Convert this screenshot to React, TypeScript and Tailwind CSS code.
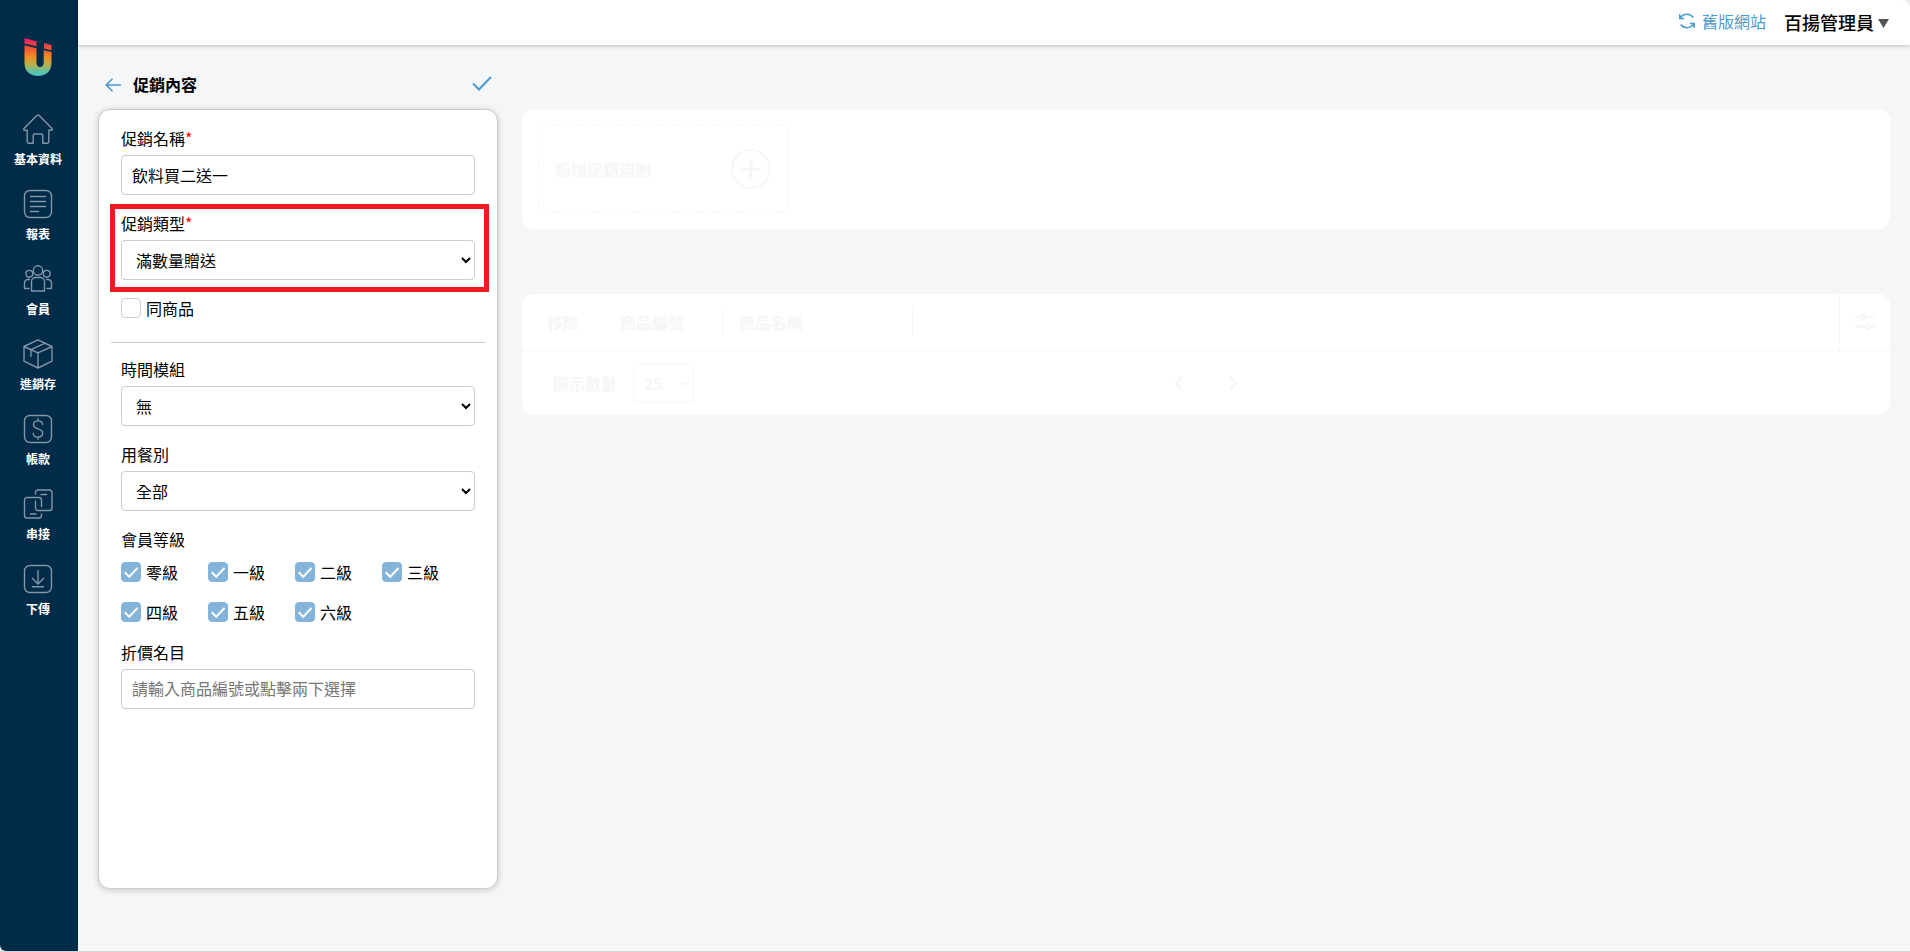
import { useState, type ReactNode } from "react";

const NAV_ITEMS: { label: string; icon: ReactNode }[] = [
  {
    label: "基本資料",
    icon: (
      <path d="M13.800 1.500 1 14.400c-.6.800-.2 1.800.8 1.800H4.200v11.600c0 .9.500 1.400 1.400 1.400h4.600v-7.400c0-1.200.7-1.800 1.800-1.800h6c1.100 0 1.800.6 1.800 1.800v7.400h4.600c.9 0 1.400-.5 1.400-1.400V16.200h2.400c1 0 1.400-1 .8-1.800L16.200 1.500c-.8-.7-1.600-.7-2.400 0Z" />
    ),
  },
  {
    label: "報表",
    icon: (
      <>
        <rect x="1.500" y="1.500" width="27" height="27" rx="5.500" />
        <path d="M7.500 7.500h15M7.500 12.500h15M7.500 17.500h15M7.500 22.500h8" />
      </>
    ),
  },
  {
    label: "會員",
    icon: (
      <>
        <circle cx="15" cy="6.500" r="4.700" />
        <circle cx="6.300" cy="9.800" r="3.400" />
        <circle cx="23.700" cy="9.800" r="3.400" />
        <path d="M8.500 27V17.500a4 4 0 0 1 4-4h5a4 4 0 0 1 4 4V27Z" />
        <path d="M6.500 15.500H5a3.500 3.500 0 0 0-3.500 3.500v5.500H6M23.500 15.500H25a3.500 3.500 0 0 1 3.500 3.500v5.500H24" />
      </>
    ),
  },
  {
    label: "進銷存",
    icon: (
      <path d="M15 .9 29 7.500v14.600L15 29 1 22.100V7.500ZM1 7.500l14 6.400 14-6.400M15 13.900V29M8 10.600v7M8 10.600 22 4.200" />
    ),
  },
  {
    label: "帳款",
    icon: (
      <>
        <rect x="1.500" y="1.500" width="27" height="27" rx="5.500" />
        <path d="M19.500 10.500c0-2.200-2-3.600-4.500-3.600s-4.500 1.400-4.500 3.800c0 5.200 9.200 3.200 9.200 8.400 0 2.500-2.100 4-4.700 4s-4.700-1.500-4.700-3.900M15 4.800v2.100M15 23.100v2.100" />
      </>
    ),
  },
  {
    label: "串接",
    icon: (
      <>
        <path d="M12.500 5V3.500a2.500 2.500 0 0 1 2.500-2.500h11.500A2.500 2.500 0 0 1 29 3.500v15.500a2.500 2.500 0 0 1-2.500 2.500H15a2.500 2.500 0 0 1-2.500-2.500V12M18 5.500h5.500" />
        <path d="M18.500 17.500V11A2.500 2.500 0 0 0 16 8.500H4A2.500 2.500 0 0 0 1.500 11v15.500A2.500 2.500 0 0 0 4 29h12a2.500 2.500 0 0 0 2.500-2.500V25M7.500 25h5.500" />
      </>
    ),
  },
  {
    label: "下傳",
    icon: (
      <>
        <rect x="1.500" y="1.500" width="27" height="27" rx="5.500" />
        <path d="M15 6.500v13.300M9.300 14.300l5.700 5.700 5.700-5.700M9.500 22.800h11" />
      </>
    ),
  },
];

const LEVELS = ["零級", "一級", "二級", "三級", "四級", "五級", "六級"];

function Logo() {
  return (
    <svg width="28" height="40" viewBox="0 0 28 40">
      <defs>
        <linearGradient id="logo" x1="0" y1="0" x2="0" y2="1">
          <stop offset="0" stopColor="#e8186c" />
          <stop offset="0.220" stopColor="#f04a3c" />
          <stop offset="0.480" stopColor="#f58a1f" />
          <stop offset="0.700" stopColor="#b9b04a" />
          <stop offset="0.880" stopColor="#5fc3a4" />
          <stop offset="1" stopColor="#4bbfc4" />
        </linearGradient>
      </defs>
      <path
        fill="url(#logo)"
        d="M.5 1 12.500 4.200v5L.5 6.500ZM20 6l7.500 2v5.200L20 11.400ZM.5 8.300 12.500 11.200V26c0 2.400 1.300 3.900 3.500 3.900s3.700-1.500 3.700-3.900V13l7.800 1.900V26c0 8-5.500 13-13.500 13S.5 34 .5 26Z"
      />
    </svg>
  );
}

function Sidebar() {
  return (
    <aside className="flex w-[78px] shrink-0 flex-col items-center rounded-bl-md bg-[#002b49] pt-[37px] pr-[2px]">
      <a href="#home" aria-label="首頁">
        <Logo />
      </a>
      <nav className="mt-[37px] flex flex-col gap-[22px]">
        {NAV_ITEMS.map((item) => (
          <a key={item.label} href="#nav" className="flex flex-col items-center gap-[6px] text-xs leading-[17px] font-bold text-white">
            <svg
              width="30"
              height="30"
              viewBox="0 0 30 30"
              fill="none"
              stroke="#8296a8"
              strokeWidth="1.400"
              strokeLinecap="round"
              strokeLinejoin="round"
            >
              {item.icon}
            </svg>
            {item.label}
          </a>
        ))}
      </nav>
    </aside>
  );
}

function TopBar() {
  return (
    <header className="relative flex h-[45px] shrink-0 items-center justify-end rounded-tr-lg bg-white pr-[21px] pb-[2px] shadow-[0_1px_4px_rgba(0,0,0,0.25)]">
      <a href="#legacy" className="flex items-center gap-[7px] pb-[2px] leading-6 text-[#4a9bcf]">
        <svg width="16" height="16" viewBox="0 0 16 16" fill="none" stroke="currentColor" strokeWidth="1.500">
          <path d="M.8 1v4.500h4.500M1 5.300C2.800 2.600 5.200 1.300 8 1.300c2.600 0 4.700 1.100 6.200 3.200M15.200 15v-4.500h-4.500M15 10.700c-1.800 2.700-4.200 4-7 4-2.600 0-4.700-1.100-6.200-3.200" />
        </svg>
        舊版網站
      </a>
      <button type="button" className="ml-[18px] flex items-center gap-1 text-lg leading-6 font-medium text-black">
        百揚管理員
        <svg className="mt-1" width="11" height="9" viewBox="0 0 11 9" fill="#555">
          <path d="M0 0h11L5.500 9Z" />
        </svg>
      </button>
    </header>
  );
}

function Field({ id, label, required, children }: { id: string; label: string; required?: boolean; children: ReactNode }) {
  return (
    <div className="flex flex-col gap-[5px]">
      <label htmlFor={id} className="leading-6">
        {label}
        {required && <span className="text-[#f00]">*</span>}
      </label>
      {children}
    </div>
  );
}

const controlClass = "h-10 w-full rounded border border-[#ccc] bg-white";

function SelectField({ id, label, required, options }: { id: string; label: string; required?: boolean; options: string[] }) {
  return (
    <Field id={id} label={label} required={required}>
      <select id={id} className={`${controlClass} pl-[10px]`}>
        {options.map((option) => (
          <option key={option}>{option}</option>
        ))}
      </select>
    </Field>
  );
}

function CheckBox({ label, defaultChecked = false }: { label: string; defaultChecked?: boolean }) {
  const [checked, setChecked] = useState(defaultChecked);

  return (
    <label className="flex h-5 items-center gap-[5px] leading-5">
      <span className="relative flex h-5 w-5">
        <input
          type="checkbox"
          checked={checked}
          onChange={(e) => setChecked(e.target.checked)}
          className="h-5 w-5 appearance-none rounded border border-[#ccc] bg-white checked:border-[#84b4d9] checked:bg-[#84b4d9]"
        />
        {checked && (
          <svg className="pointer-events-none absolute inset-0" width="20" height="20" viewBox="0 0 20 20" fill="none" stroke="#fff" strokeWidth="2">
            <path d="m3.700 10.300 4.500 4.500 8.300-8.800" />
          </svg>
        )}
      </span>
      {label}
    </label>
  );
}

function PromotionForm() {
  return (
    <section className="w-[400px] shrink-0">
      <div className="flex h-12 items-center pr-[6px] pl-[7px]">
        <button type="button" aria-label="返回" className="text-[#4a9bcf]">
          <svg width="16" height="14" viewBox="0 0 16 14" fill="none" stroke="currentColor" strokeWidth="1.600">
            <path d="M16 7H1M7.500.8 1.200 7l6.300 6.200" />
          </svg>
        </button>
        <h1 className="ml-3 pb-[2px] font-bold">促銷內容</h1>
        <button type="button" aria-label="儲存" className="ml-auto pb-[2px] text-[#4a9bcf]">
          <svg width="20" height="16" viewBox="0 0 20 16" fill="none" stroke="currentColor" strokeWidth="2">
            <path d="m1 7.500 6 6L19 1" />
          </svg>
        </button>
      </div>
      <form className="min-h-[780px] rounded-xl border border-[#ccc] bg-white px-[22px] pt-4 shadow-[0_1px_6px_rgba(0,0,0,0.2)]">
        <div className="flex flex-col gap-4">
          <Field id="name" label="促銷名稱" required>
            <input id="name" type="text" defaultValue="飲料買二送一" className={`${controlClass} px-[10px]`} />
          </Field>
          <div className="relative">
            <SelectField id="type" label="促銷類型" required options={["滿數量贈送"]} />
            <div className="pointer-events-none absolute -top-[7px] -right-[14px] -bottom-3 -left-[11px] border-5 border-[#ed1c24]" />
          </div>
          <div className="pt-[2px]">
            <CheckBox label="同商品" />
          </div>
        </div>
        <hr className="-mx-[10px] mt-6 mb-[14px] border-[#ccc]" />
        <div className="flex flex-col gap-4">
          <SelectField id="time" label="時間模組" options={["無"]} />
          <SelectField id="meal" label="用餐別" options={["全部"]} />
          <fieldset className="pb-[2px]">
            <legend className="mb-[11px] leading-6">會員等級</legend>
            <div className="grid grid-cols-[repeat(4,87px)] gap-y-5">
              {LEVELS.map((level) => (
                <CheckBox key={level} label={level} defaultChecked />
              ))}
            </div>
          </fieldset>
          <Field id="discount" label="折價名目">
            <input
              id="discount"
              type="text"
              placeholder="請輸入商品編號或點擊兩下選擇"
              className={`${controlClass} px-[10px] pb-[2px] placeholder:text-[#757575]`}
            />
          </Field>
        </div>
      </form>
    </section>
  );
}

function RuleCard() {
  return (
    <section className="rounded-xl bg-white p-4">
      <button
        type="button"
        className="flex h-[88px] w-[250px] items-center justify-between rounded-sm border border-dashed border-[#f4f6f8] px-4 font-bold"
      >
        新增促銷規則
        <svg width="40" height="40" viewBox="0 0 40 40" fill="none" stroke="currentColor" strokeWidth="2">
          <circle cx="20" cy="20" r="19" />
          <path d="M20 10.500v19M10.500 20h19" strokeWidth="3" />
        </svg>
      </button>
    </section>
  );
}

function ProductCard() {
  return (
    <section className="rounded-xl bg-white">
      <div className="flex h-[57px] border-b border-[#f4f6f8]">
        <table className="my-[14px] text-left">
          <thead>
            <tr className="h-7">
              <th className="w-[73px] pl-[25px]">移除</th>
              <th className="w-[127px] border-r border-[#f4f6f8] pl-[25px]">商品編號</th>
              <th className="w-[190px] border-r border-[#f4f6f8] pl-4">商品名稱</th>
            </tr>
          </thead>
        </table>
        <button type="button" aria-label="欄位設定" className="ml-auto flex w-[51px] items-center justify-center border-l border-[#f4f6f8]">
          <svg width="20" height="18" viewBox="0 0 20 18" fill="none" stroke="currentColor" strokeWidth="2.500" strokeLinecap="round">
            <path d="M1.500 4.500h3M10.500 4.500h8M1.500 13.500h9M16.500 13.500h2" />
            <circle cx="7.500" cy="4.500" r="2.400" />
            <circle cx="13.500" cy="13.500" r="2.400" />
          </svg>
        </button>
      </div>
      <div className="grid h-16 grid-cols-[1fr_auto_1fr] items-center">
        <div className="flex items-center gap-4 pl-[31px]">
          <label htmlFor="size" className="font-bold">
            顯示數量
          </label>
          <select id="size" className="h-10 w-[61px] rounded border border-[#f4f6f8] bg-white pl-[6px] font-medium">
            <option>25</option>
          </select>
        </div>
        <div className="flex gap-[46px]">
          <button type="button" aria-label="上一頁">
            <svg width="9" height="15" viewBox="0 0 9 15" fill="none" stroke="currentColor" strokeWidth="2.400">
              <path d="M8 1 1.800 7.500 8 14" />
            </svg>
          </button>
          <button type="button" aria-label="下一頁">
            <svg width="9" height="15" viewBox="0 0 9 15" fill="none" stroke="currentColor" strokeWidth="2.400">
              <path d="m1 1 6.200 6.500L1 14" />
            </svg>
          </button>
        </div>
      </div>
    </section>
  );
}

export default function App() {
  return (
    <div className="flex min-h-screen border-b border-[#d5d7da] bg-[#f4f6f8] font-['Noto_Sans_CJK_TC',sans-serif] text-base text-black">
      <Sidebar />
      <div className="flex min-w-0 flex-1 flex-col">
        <TopBar />
        <main className="flex gap-6 px-5 pt-4">
          <PromotionForm />
          <div className="flex min-w-0 flex-1 flex-col gap-[65px] pt-12 text-[#f4f6f8]">
            <RuleCard />
            <ProductCard />
          </div>
        </main>
      </div>
    </div>
  );
}
